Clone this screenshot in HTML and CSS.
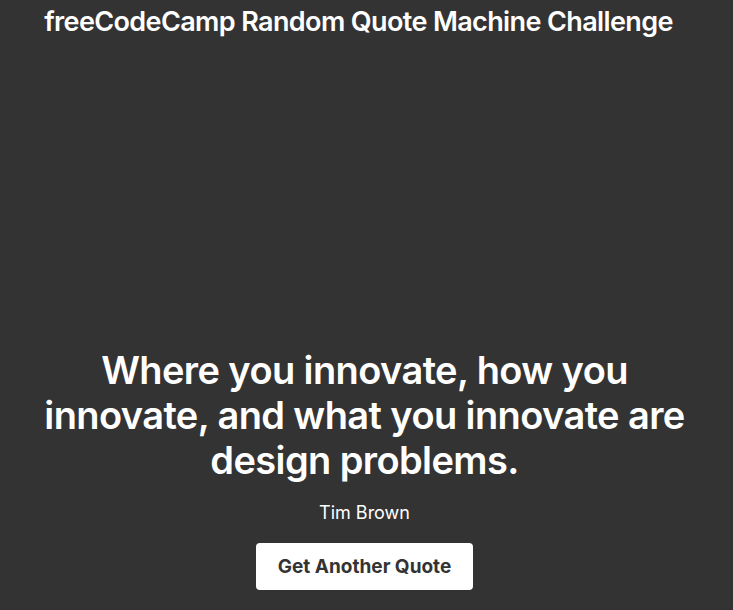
FILE: index.html
```html
<!DOCTYPE html>
<html>
<head>
<meta charset="utf-8">
<link rel="stylesheet" href="styles.css">
</head>
<body>
<div class="page">
  <h1 class="title">freeCodeCamp Random Quote Machine Challenge</h1>
  <main class="quote-box">
    <p class="quote">Where you innovate, how you innovate, and what you innovate are design problems.</p>
    <p class="author">Tim Brown</p>
    <button class="btn">Get Another Quote</button>
  </main>
</div>
</body>
</html>
```
FILE: styles.css
```css
html, body {
  margin: 0;
  padding: 0;
  background: #333333;
  height: 100%;
}
.page {
  height: 610px;
  box-sizing: border-box;
  padding-right: 4px;
  display: flex;
  flex-direction: column;
  align-items: center;
  font-family: Inter, "Noto Sans", sans-serif;
  color: #ffffff;
}
.title {
  margin: 6px 0 0;
  padding-right: 12px;
  font-size: 27px;
  font-weight: 600;
  line-height: 32px;
  letter-spacing: -0.62px;
}
.quote-box {
  margin-top: auto;
  margin-bottom: 20px;
  display: flex;
  flex-direction: column;
  align-items: center;
  width: 100%;
}
.quote {
  margin: 0;
  max-width: 660px;
  text-align: center;
  font-size: 38px;
  font-weight: 560;
  line-height: 45px;
  letter-spacing: -0.6px;
}
.author {
  margin: 18px 0 0;
  font-size: 18px;
  line-height: 24px;
}
.btn {
  margin-top: 18px;
  width: 217px;
  height: 47px;
  background: #ffffff;
  color: #333333;
  border: none;
  border-radius: 4px;
  font-family: Inter, "Noto Sans", sans-serif;
  font-size: 19px;
  font-weight: 700;
}
```
